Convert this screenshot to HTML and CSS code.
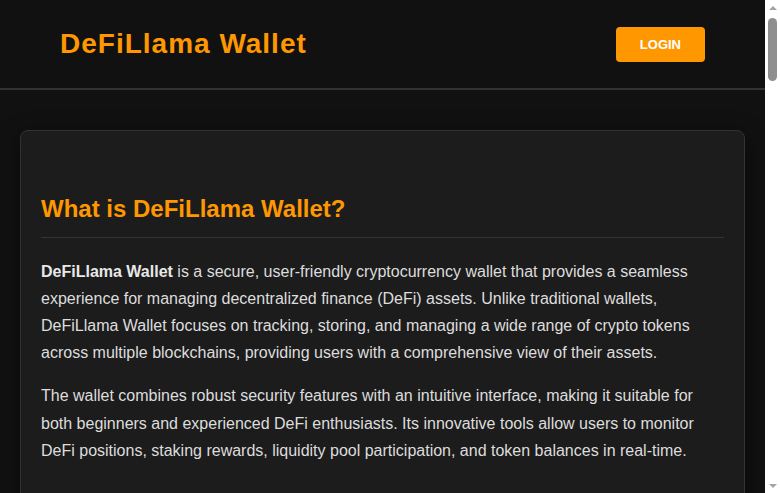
FILE: index.html
```html
<!DOCTYPE html>
<html lang="en">
<head>
    <meta charset="UTF-8">
    <meta name="viewport" content="width=device-width, initial-scale=1.0">
    <title>DeFiLlama Wallet</title>
    <link rel="stylesheet" href="styles.css">
</head>
<body>
<header class="header">
    <div class="logo">DeFiLlama Wallet</div>
    <button class="login-btn">LOGIN</button>
</header>

<main class="main">
    <div class="card">
        <section class="section">
            <h2>What is DeFiLlama Wallet?</h2>
            <p><strong>DeFiLlama Wallet</strong> is a secure, user-friendly cryptocurrency wallet that provides a seamless experience for managing decentralized finance (DeFi) assets. Unlike traditional wallets, DeFiLlama Wallet focuses on tracking, storing, and managing a wide range of crypto tokens across multiple blockchains, providing users with a comprehensive view of their assets.</p>
            <p>The wallet combines robust security features with an intuitive interface, making it suitable for both beginners and experienced DeFi enthusiasts. Its innovative tools allow users to monitor DeFi positions, staking rewards, liquidity pool participation, and token balances in real-time.</p>
        </section>

        <section class="section">
            <h2>Key Features</h2>
            <ul>
                <li><strong>Multi-chain support:</strong> Manage assets on Ethereum, BNB Chain, Polygon, Arbitrum, Optimism, Avalanche and many more networks from a single place.</li>
                <li><strong>Portfolio tracking:</strong> See the total value of your holdings, your DeFi positions and your historical performance at a glance.</li>
                <li><strong>Non-custodial security:</strong> Your private keys never leave your device, so you stay in full control of your funds.</li>
                <li><strong>Built-in swaps:</strong> Find the best rates across decentralized exchanges with the integrated aggregator.</li>
                <li><strong>Yield insights:</strong> Compare APYs across protocols and discover new opportunities to put your assets to work.</li>
            </ul>
        </section>

        <section class="section">
            <h2>How to Get Started</h2>
            <p>Getting started with DeFiLlama Wallet takes only a few minutes. Download the extension or mobile app, create a new wallet or import an existing one using your recovery phrase, and set a strong password to protect access on your device.</p>
            <p>Once your wallet is set up, you can add the networks you use, connect to your favourite decentralized applications and begin tracking your positions immediately. No account or personal information is required.</p>
        </section>

        <section class="section">
            <h2>Security First</h2>
            <p>Security is at the heart of DeFiLlama Wallet. All sensitive data is encrypted locally, and transaction simulations warn you about risky approvals or suspicious contracts before you sign anything.</p>
            <p>The wallet also supports hardware wallets, so you can keep your keys offline while still enjoying the convenience of the DeFiLlama interface. Regular audits and an open approach to development help keep users safe.</p>
        </section>

        <section class="section">
            <h2>Tracking Your DeFi Positions</h2>
            <p>DeFiLlama Wallet automatically detects your positions in lending markets, liquidity pools, staking contracts and yield vaults. Each position shows its current value, accrued rewards and the underlying tokens, giving you a clear picture of where your capital is deployed.</p>
            <p>Alerts can notify you when a loan approaches liquidation, when rewards are ready to claim, or when the yield on a pool changes significantly.</p>
        </section>

        <section class="section">
            <h2>Supported Networks</h2>
            <p>The wallet supports all major EVM-compatible chains and is continuously adding new ones. Switching between networks is instant, and balances across every chain are combined into a single portfolio view.</p>
            <p>Custom RPC endpoints can be added for testnets or less common chains, making DeFiLlama Wallet a flexible choice for developers as well as everyday users.</p>
        </section>

        <section class="section">
            <h2>Fees and Costs</h2>
            <p>DeFiLlama Wallet is free to download and use. You only pay the network gas fees required by each blockchain. The built-in swap aggregator shows the full cost of each trade up front, including gas, so there are no surprises.</p>
        </section>

        <section class="section">
            <h2>Frequently Asked Questions</h2>
            <p><strong>Is DeFiLlama Wallet free?</strong><br>Yes. The wallet is completely free, and you only pay standard network fees when sending transactions.</p>
            <p><strong>Can I import an existing wallet?</strong><br>Yes. You can import any wallet using its recovery phrase or private key, or connect a hardware wallet.</p>
            <p><strong>What happens if I lose my device?</strong><br>As long as you have your recovery phrase, you can restore your wallet on any new device in seconds.</p>
            <p><strong>Does DeFiLlama store my data?</strong><br>No. Your keys and personal data are stored only on your device and are never shared with our servers.</p>
        </section>

        <section class="section">
            <h2>Conclusion</h2>
            <p>DeFiLlama Wallet brings together powerful portfolio tracking, multi-chain support and strong security in one simple interface. Whether you are just starting out or managing a large DeFi portfolio, it gives you the tools you need to stay informed and in control.</p>
        </section>
    </div>
</main>

<footer class="footer">
    <p>&copy; 2024 DeFiLlama Wallet. All rights reserved.</p>
</footer>

<!-- window scrollbar as the desktop browser draws it -->
<div class="scrollbar" aria-hidden="true">
    <div class="scroll-btn"><span class="arrow-up"></span></div>
    <div class="scroll-track"><div class="scroll-thumb"></div></div>
    <div class="scroll-btn"><span class="arrow-down"></span></div>
</div>
</body>
</html>
```

FILE: styles.css
```css
* {
    margin: 0;
    padding: 0;
    box-sizing: border-box;
}

body {
    padding-right: 15px;
    background-color: #111111;
    color: #dddddd;
    font-family: 'Liberation Sans', Arial, sans-serif;
    font-size: 16px;
    line-height: 1.7;
}

.header {
    display: flex;
    justify-content: space-between;
    align-items: center;
    height: 90px;
    padding: 0 60px;
    background-color: #111111;
    border-bottom: 2px solid #333333;
}

.logo {
    color: #ff9800;
    font-size: 28px;
    font-weight: 700;
    letter-spacing: 1px;
    line-height: 1.2;
}

.login-btn {
    padding: 10px 24px;
    background-color: #ff9800;
    color: #ffffff;
    border: none;
    border-radius: 4px;
    font-family: inherit;
    font-size: 13px;
    font-weight: 700;
    line-height: 15px;
    cursor: pointer;
}

.main {
    padding: 40px 20px;
}

.card {
    background-color: #1c1c1c;
    border: 1px solid #333333;
    border-radius: 8px;
    padding: 24px 20px 20px;
    box-shadow: 0 4px 20px rgba(0, 0, 0, 0.5);
}

.section {
    margin-top: 40px;
}

h2 {
    color: #ff9800;
    font-size: 24px;
    font-weight: 700;
    line-height: 1.15;
    padding-bottom: 14px;
    margin-bottom: 20px;
    border-bottom: 1px solid #333333;
}

p {
    margin-bottom: 16px;
}

strong {
    color: #e8e8e8;
}

ul {
    padding-left: 20px;
}

li {
    margin-bottom: 12px;
}

.footer {
    padding: 30px 20px 40px;
    text-align: center;
    color: #888888;
    font-size: 14px;
    border-top: 1px solid #333333;
}

.footer p {
    margin: 0;
}

/* scrollbar strip */
.scrollbar {
    position: fixed;
    top: 0;
    right: 0;
    width: 15px;
    height: 100vh;
    display: flex;
    flex-direction: column;
    background-color: #ffffff;
}

.scroll-btn {
    height: 15px;
    display: flex;
    justify-content: center;
    align-items: center;
}

.arrow-up {
    border-left: 4px solid transparent;
    border-right: 4px solid transparent;
    border-bottom: 4px solid #a3a3a3;
}

.arrow-down {
    border-left: 4px solid transparent;
    border-right: 4px solid transparent;
    border-top: 4px solid #a3a3a3;
}

.scroll-track {
    flex: 1;
    padding: 3px 3px 0;
}

.scroll-thumb {
    height: 63px;
    border-radius: 5px;
    background-color: #8f8f8f;
}
```
